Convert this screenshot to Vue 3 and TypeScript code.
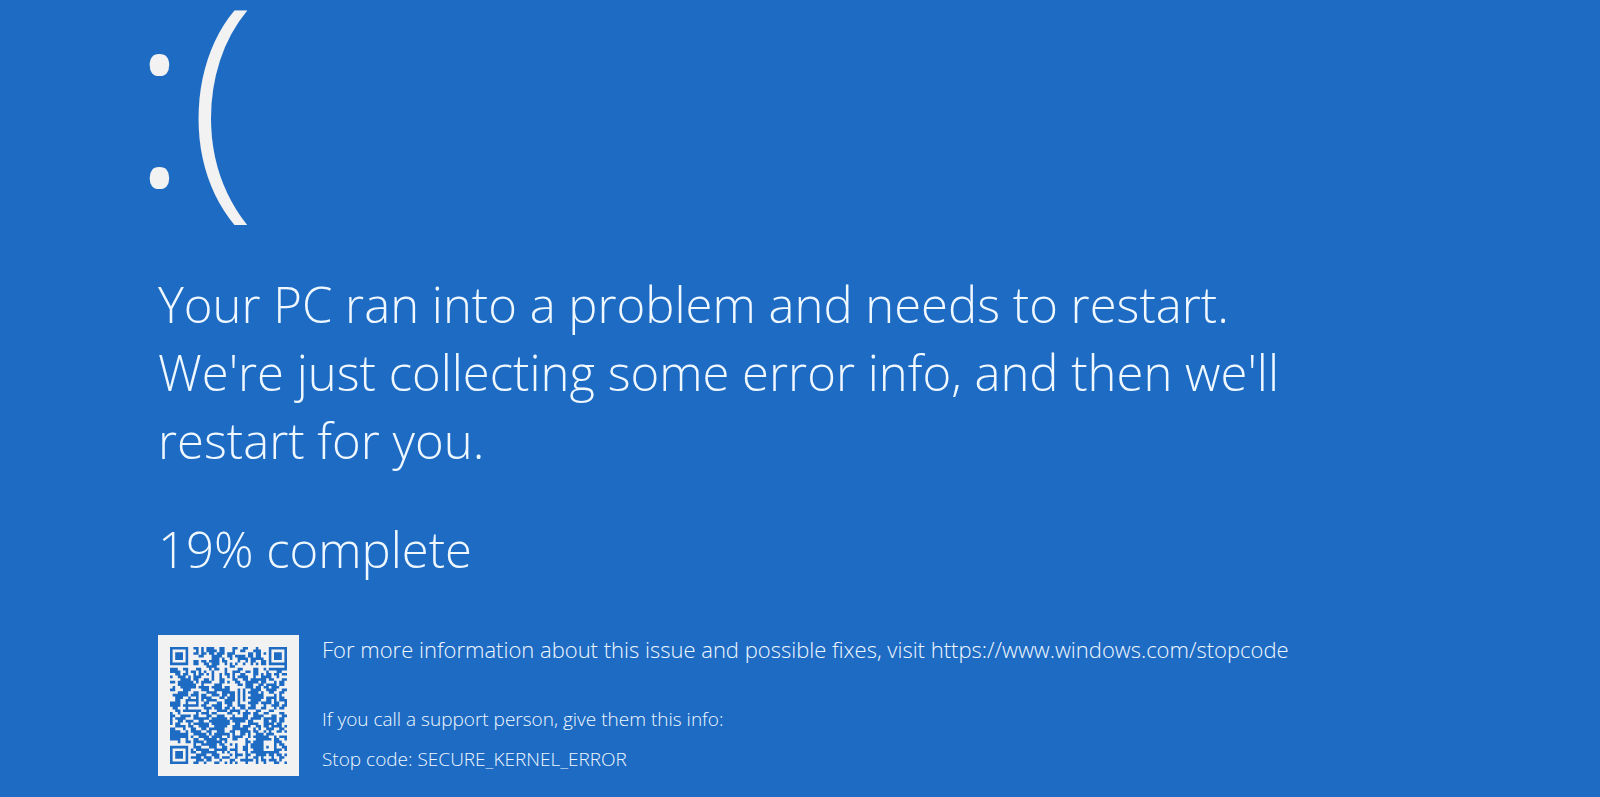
<script setup lang="ts">
const progress = 19
const stopCode = 'SECURE_KERNEL_ERROR'
const supportUrl = 'https://www.windows.com/stopcode'

// One string per row of the code; "#" is a dark module.
const modules: string[] = [
  '#######..##.#.###..##...##..##...#....#######',
  '#.....#...#.#.####.##...#..##...###...#.....#',
  '#.###.#..##.##.##.###.###.....##.##.#.#.###.#',
  '#.###.#....##...####..##.####.##.##...#.###.#',
  '#.###.#.........###.#..#..####.#####..#.###.#',
  '#.....#..##.##.####.##....#..#.##..##.#.....#',
  '#######..##..##.###..#.#.#..#..#.#.##.#######',
  '..............####.....##...................#',
  '###..##...##...#.##..#....##....##..#.#######',
  '####..#.##.#.#..#....#..###..##.##...#...##..',
  '..##.##..#.##.#.#..#.##.#..##...##.#.##.##.##',
  '#..###.#.###....#..#..#.#.####..#..####..#...',
  '....####.##..##.#..##...##..##.######.##...##',
  '##.######.#.####...##.#..##..#####.##...#.##.',
  '...#######..#....###......##.###..##.####.##.',
  '.#..######.####.####.##......###.##.##.###...',
  '##...###....###..######...#.#..####..####..##',
  '...####..##...####..#####.#.#.####.#..##..##.',
  '.######.###.##..###.##.##.#.#..#####....#.#..',
  '..###..#..#.####...##.###.#.#.######.####.##.',
  '..##..#####.#.####...####.#.#..####..##.#.###',
  '####..#...#..##...##.###..#...####.####.##..#',
  '####.######.##..####..##..###..##...#..###.##',
  '.##...#......###.###.##.#..##.###..##...#.##.',
  '..##.#######..#...####.####..#...##...##.....',
  '#..#......#.###.##....##..#.###.##..##....##.',
  '##..####.##...##..###...#...##..####...##..##',
  '#.####...######.######.#######.####.#####.##.',
  '#..##.###..##..########.#####.##....##.##.##.',
  '#.##...#.######.#######..##...####..####.##..',
  '..####.##..####..#####..###.###..##.##.####.#',
  '##...#..##..##.######...######..#.#..###..##.',
  '####..#.####..##..###..##..####.##..#.#..##.#',
  '#######..#####.#.######.#..##.#..###.###.....',
  '#######.#..####.####..#.####..#.######..#.###',
  '####..#..##..#####.###..##...#...######.##..#',
  '...#..##.####.######.#.......##.####....###..',
  '.........#..######.##..#.#...#.#####....#.##.',
  '#######..###...###..##...#..##.#####.#..#..##',
  '#.....#.#.#####..#####.###..##..####....###.#',
  '#.###.#.##..######..#.#..#...#.###########...',
  '#.###.#...####..###....#.###.##..####.##.##.#',
  '#.###.#.####.###.##.###..#...#..##.#...#..##.',
  '#.....#...###.##...#...##..#####.#.##.###.#..',
  '#######..##..#...##..#.#.#...#...#..#...##..#',
]

const codePath: string = modules
  .map((row, y) =>
    [...row].map((cell, x) => (cell === '#' ? `M${x} ${y}h1v1h-1z` : '')).join(''),
  )
  .join('')
</script>

<template>
  <main class="screen">
    <div class="face">:(</div>
    <h1 class="message">
      Your PC ran into a problem and needs to restart. We're just collecting some error info, and
      then we'll restart for you.
    </h1>
    <p class="progress">{{ progress }}% complete</p>
    <section class="details">
      <svg class="code" viewBox="0 0 45 45" role="img" aria-label="QR code">
        <path :d="codePath" />
      </svg>
      <div class="info">
        <p class="more">
          For more information about this issue and possible fixes, visit
          <a :href="supportUrl">{{ supportUrl }}</a>
        </p>
        <p class="support">If you call a support person, give them this info:</p>
        <p class="support">Stop code: {{ stopCode }}</p>
      </div>
    </section>
  </main>
</template>

<style>
body {
  margin: 0;
  background: #1e6bc4;
}
</style>

<style scoped>
.screen {
  box-sizing: border-box;
  min-height: 100vh;
  padding: 0 158px 20px;
  background: #1e6bc4;
  color: #f0f8ff;
  font-family: 'Open Sans', 'Noto Sans', sans-serif;
  font-weight: 300;
}

.face {
  margin-left: -28px;
  color: #f2f2f2;
  font-size: 246px;
  line-height: 182px;
}

.message,
.progress {
  margin: 0;
  font-size: 49px;
  font-weight: 300;
  line-height: 68px;
}

.message {
  max-width: 1160px;
  margin-top: 88px;
}

.progress {
  margin-top: 41px;
}

.details {
  display: flex;
  gap: 23px;
  margin-top: 52px;
}

.code {
  box-sizing: border-box;
  flex: none;
  width: 141px;
  height: 141px;
  padding: 12px;
  background: #f2f2f2;
  fill: #1e6bc4;
}

.info {
  min-width: 0;
}

.info p {
  margin: 0;
}

.info .more {
  margin-bottom: 36px;
  font-size: 22px;
  line-height: 28px;
}

.more a {
  color: inherit;
  text-decoration: none;
}

.support {
  font-size: 19px;
  line-height: 40px;
}
</style>
